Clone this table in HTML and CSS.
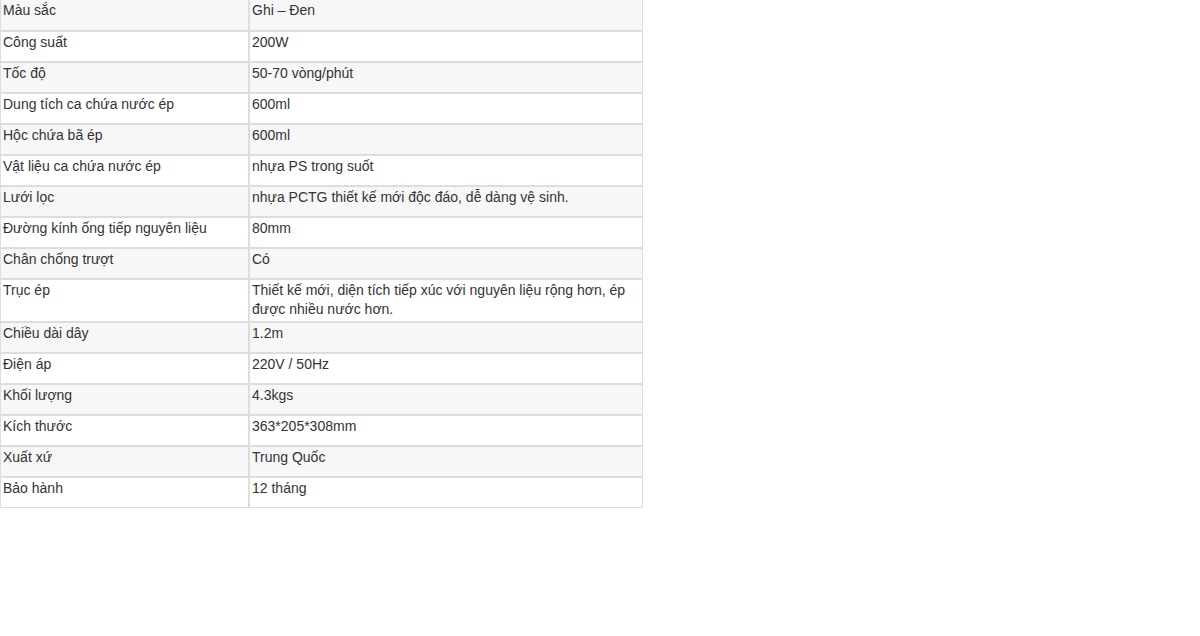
FILE: index.html
```html
<!DOCTYPE html>
<html lang="vi">
<head>
  <meta charset="UTF-8" />
  <title>Thông số kỹ thuật</title>
  <link rel="stylesheet" href="styles.css">
</head>
<body>

  <table class="spec-table">
    <colgroup>
      <col class="col-name">
      <col class="col-value">
    </colgroup>
    <tbody>
      <tr><td>Màu sắc</td><td>Ghi – Đen</td></tr>
      <tr><td>Công suất</td><td>200W</td></tr>
      <tr><td>Tốc độ</td><td>50-70 vòng/phút</td></tr>
      <tr><td>Dung tích ca chứa nước ép</td><td>600ml</td></tr>
      <tr><td>Hộc chứa bã ép</td><td>600ml</td></tr>
      <tr><td>Vật liệu ca chứa nước ép</td><td>nhựa PS trong suốt</td></tr>
      <tr><td>Lưới lọc</td><td>nhựa PCTG thiết kế mới độc đáo, dễ dàng vệ sinh.</td></tr>
      <tr><td>Đường kính ống tiếp nguyên liệu</td><td>80mm</td></tr>
      <tr><td>Chân chống trượt</td><td>Có</td></tr>
      <tr><td>Trục ép</td><td>Thiết kế mới, diện tích tiếp xúc với nguyên liệu rộng hơn, ép được nhiều nước hơn.</td></tr>
      <tr><td>Chiều dài dây</td><td>1.2m</td></tr>
      <tr><td>Điện áp</td><td>220V / 50Hz</td></tr>
      <tr><td>Khối lượng</td><td>4.3kgs</td></tr>
      <tr><td>Kích thước</td><td>363*205*308mm</td></tr>
      <tr><td>Xuất xứ</td><td>Trung Quốc</td></tr>
      <tr><td>Bảo hành</td><td>12 tháng</td></tr>
    </tbody>
  </table>

</body>
</html>
```

FILE: styles.css
```css
body {
  margin: 0;
  padding: 0;
  background-color: #fff;
  font-family: "Liberation Sans", Arial, sans-serif;
  font-size: 14px;
  color: #333;
}

.spec-table {
  width: 643px;
  table-layout: fixed;
  border-collapse: separate;
  border-spacing: 0;
}

.col-name {
  width: 249px;
}

.col-value {
  width: 394px;
}

.spec-table td {
  height: 31px;
  box-sizing: border-box;
  padding: 1px 2px 2px 2px;
  border: 1px solid #ddd;
  line-height: 19px;
  vertical-align: top;
}

.spec-table tr:first-child td {
  border-top: 0;
}

.spec-table tr:nth-child(odd) td {
  background-color: #f7f7f7;
}
```
